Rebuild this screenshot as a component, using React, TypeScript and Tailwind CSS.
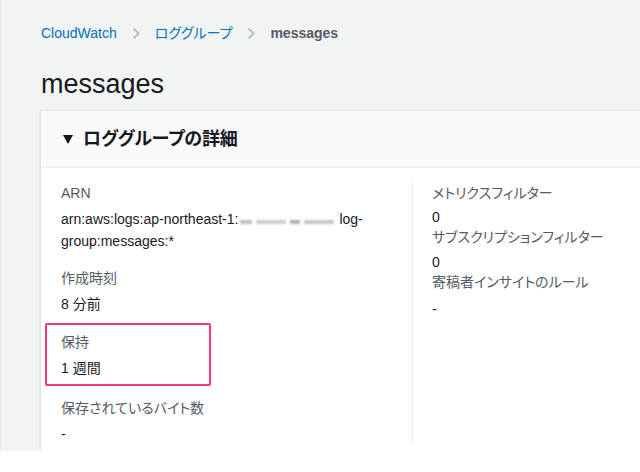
const sans = "font-['Liberation_Sans','Noto_Sans_CJK_JP',sans-serif] [font-feature-settings:'palt']";

function Chevron() {
  return (
    <svg width="8" height="13" viewBox="0 0 8 13" className="mx-[15px]">
      <path d="M1.5 1.5 L6.5 6.5 L1.5 11.5" fill="none" stroke="#aab7b8" strokeWidth="1.7" />
    </svg>
  );
}

function Blurred() {
  return (
    <span className="inline-flex items-center gap-[4px] w-[101px] h-[10px] align-[0px] pl-[2px] blur-[1px]">
      <span className="w-[12px] h-[4px] bg-[#b9bcbf]" />
      <span className="w-[30px] h-[4px] bg-[#c9cccf]" />
      <span className="w-[10px] h-[4px] bg-[#aeb1b4]" />
      <span className="w-[30px] h-[4px] bg-[#c2c5c8]" />
    </span>
  );
}

export default function App() {
  return (
    <div className={`w-[640px] h-[472px] bg-white overflow-hidden ${sans}`}>
      <div className="h-[451px] bg-[#f2f3f3] border-l border-[#e3e4e4] overflow-hidden">
        <nav className="flex items-center pl-[40px] pt-[23px] h-[43px] text-[14px] leading-[20px]">
          <span className="text-[#0073bb]">CloudWatch</span>
          <Chevron />
          <span className="text-[#0073bb]">ロググループ</span>
          <Chevron />
          <span className="text-[#545b64] font-bold">messages</span>
        </nav>
        <h1 className="pl-[40px] mt-[23px] text-[27px] leading-[36px] text-[#16191f] font-normal">
          messages
        </h1>
        <section className="ml-[39px] mt-[8px] w-[640px] bg-white border border-[#e1e4e4] shadow-[0_1px_1px_rgba(0,28,36,0.2)]">
          <header className="h-[57px] flex items-center pl-[22px] bg-[#fafafa] border-b border-[#eaeded]">
            <svg width="10" height="9" viewBox="0 0 10 9">
              <path d="M0 0 H10 L5 9 Z" fill="#16191f" />
            </svg>
            <h2 className="ml-[10px] text-[18px] font-bold text-[#16191f] tracking-[-0.2px]">
              ロググループの詳細
            </h2>
          </header>
          <div className="flex pt-[14px] h-[300px]">
            <div className="w-[371px] pl-[20px] text-[14px]">
              <div className="leading-[22px] text-[#545b64]">ARN</div>
              <div className="mt-[4px] leading-[22px] text-[#16191f] w-[330px]">
                arn:aws:logs:ap-northeast-1:<Blurred />log-
                <br />
                group:messages:*
              </div>
              <div className="mt-[15px] leading-[22px] text-[#545b64]">作成時刻</div>
              <div className="mt-[4px] leading-[22px] text-[#16191f]">8 分前</div>
              <div className="mt-[8px] -ml-[16px] w-[166px] pl-[14px] pt-[6px] pb-[5px] border-2 border-[#f7386f] rounded-[2px]">
                <div className="leading-[22px] text-[#545b64]">保持</div>
                <div className="mt-[4px] leading-[22px] text-[#16191f]">1 週間</div>
              </div>
              <div className="mt-[11px] leading-[22px] text-[#545b64]">保存されているバイト数</div>
              <div className="mt-[4px] leading-[22px] text-[#16191f]">-</div>
            </div>
            <div className="w-px h-[261px] bg-[#eaeded]" />
            <div className="pl-[19px] text-[14px]">
              <div className="leading-[22px] text-[#545b64]">メトリクスフィルター</div>
              <div className="mt-[3px] leading-[20px] text-[#16191f]">0</div>
              <div className="leading-[20px] text-[#545b64]">サブスクリプションフィルター</div>
              <div className="mt-[5px] leading-[20px] text-[#16191f]">0</div>
              <div className="leading-[20px] text-[#545b64]">寄稿者インサイトのルール</div>
              <div className="mt-[6px] leading-[22px] text-[#16191f]">-</div>
            </div>
          </div>
        </section>
      </div>
    </div>
  );
}
